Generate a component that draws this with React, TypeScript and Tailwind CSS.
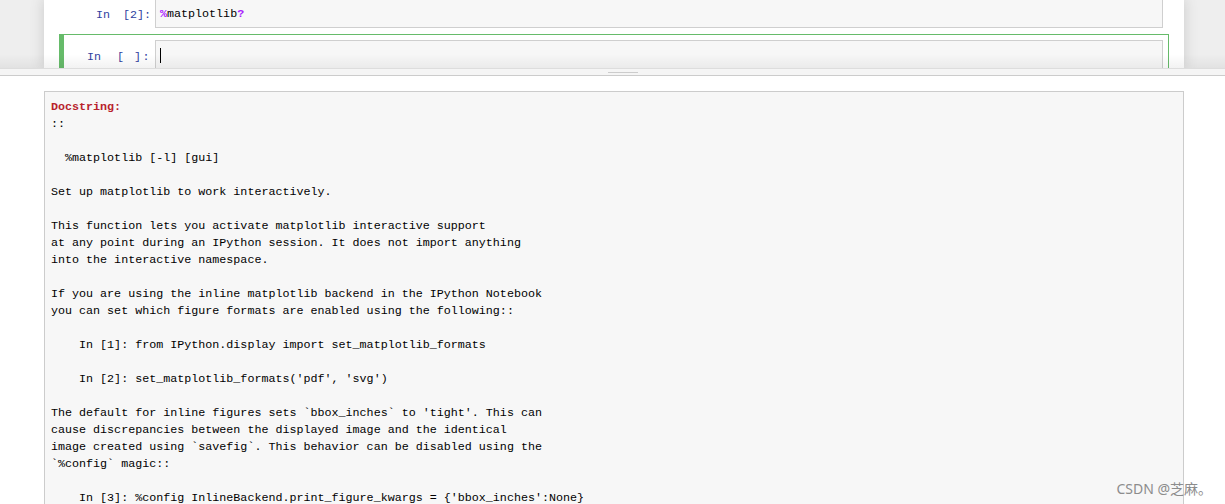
const docLines = [
  "::",
  "",
  "  %matplotlib [-l] [gui]",
  "",
  "Set up matplotlib to work interactively.",
  "",
  "This function lets you activate matplotlib interactive support",
  "at any point during an IPython session. It does not import anything",
  "into the interactive namespace.",
  "",
  "If you are using the inline matplotlib backend in the IPython Notebook",
  "you can set which figure formats are enabled using the following::",
  "",
  "    In [1]: from IPython.display import set_matplotlib_formats",
  "",
  "    In [2]: set_matplotlib_formats('pdf', 'svg')",
  "",
  "The default for inline figures sets `bbox_inches` to 'tight'. This can",
  "cause discrepancies between the displayed image and the identical",
  "image created using `savefig`. This behavior can be disabled using the",
  "`%config` magic::",
  "",
  "    In [3]: %config InlineBackend.print_figure_kwargs = {'bbox_inches':None}",
];

function Prompt({ count }: { count: string }) {
  const empty = count === " ";
  return (
    <div
      className={`flex w-[86px] shrink-0 justify-end pr-[4px] text-[#303F9F] whitespace-pre ${
        empty ? "gap-[16px]" : "gap-[13px]"
      }`}
    >
      <span>In</span>
      <span className={empty ? "tracking-[1.5px]" : ""}>[{count}]:</span>
    </div>
  );
}

export default function App() {
  return (
    <div className="relative flex h-[504px] w-[1225px] flex-col overflow-hidden bg-white font-['Liberation_Mono',monospace] text-[11.7px] leading-[17px] text-black">
      {/* notebook area */}
      <div className="relative flex h-[68px] shrink-0 overflow-hidden bg-[#eeeeee]">
        <div className="ml-[44px] flex w-[1140px] flex-col bg-white shadow-[0_0_12px_1px_rgba(87,87,87,0.2)]">
          {/* cell 1 */}
          <div className="mx-[15px] flex border-x border-b border-l-[5px] border-transparent px-[5px] pb-[5px]">
            <div className="flex h-[28px] items-end pb-[4px]">
              <Prompt count="2" />
            </div>
            <div className="flex h-[28px] flex-1 items-end border-x border-b border-[#cfcfcf] bg-[#f7f7f7] pb-[4px] pl-[4px]">
              <span className="font-bold text-[#AA22FF]">%</span>
              <span>matplotlib</span>
              <span className="font-bold text-[#AA22FF]">?</span>
            </div>
          </div>
          {/* cell 2, selected */}
          <div className="mx-[15px] flex border border-l-[5px] border-[#66BB6A] px-[5px] pt-[5px]">
            <div className="flex items-start pt-[9px]">
              <Prompt count=" " />
            </div>
            <div className="h-[40px] flex-1 border border-[#cfcfcf] bg-[#f7f7f7] pl-[4px] pt-[7px]">
              <div className="h-[15px] w-px bg-black" />
            </div>
          </div>
        </div>
        <div className="pointer-events-none absolute inset-x-0 bottom-0 h-[14px] bg-gradient-to-b from-transparent to-[rgba(0,0,0,0.05)]" />
      </div>

      {/* splitter */}
      <div className="flex h-[8px] shrink-0 items-center border-y border-t-[#dddddd] border-b-[#cccccc] bg-[#f5f5f5]">
        <div className="ml-[608px] h-px w-[30px] bg-[#cccccc]" />
      </div>

      {/* pager */}
      <div className="flex-1 pt-[15px]">
        <div className="ml-[44px] h-[500px] w-[1140px] border border-[#cccccc] bg-[#f7f7f7] pl-[6px] pt-[7px]">
          <div className="font-bold text-[#b8222c]">Docstring:</div>
          {docLines.map((line, i) => (
            <div key={i} className="h-[17px] whitespace-pre">
              {line}
            </div>
          ))}
        </div>
      </div>

      <div className="absolute bottom-[6px] right-[13px] font-['Noto_Sans','Noto_Sans_CJK_SC',sans-serif] text-[14px] leading-[18px] text-[#8c8c8c]">
        CSDN @芝麻。
      </div>
    </div>
  );
}
